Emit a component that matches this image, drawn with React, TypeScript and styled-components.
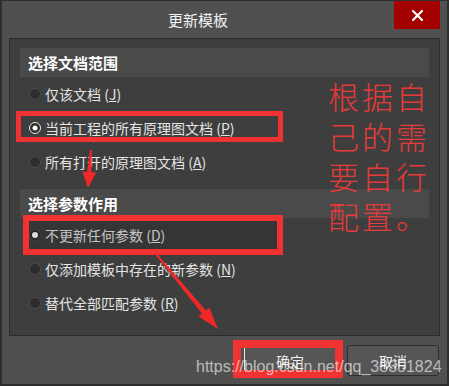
import React from 'react';
import styled, { createGlobalStyle } from 'styled-components';

const GlobalStyle = createGlobalStyle`
  html, body {
    margin: 0;
    padding: 0;
    background: #2e2e2e;
  }
  body {
    font-family: "Noto Sans CJK SC", "Noto Sans", sans-serif;
  }
`;

const Window = styled.div`
  position: relative;
  width: 449px;
  height: 386px;
  box-sizing: border-box;
  border: 2px solid #2e2e2e;
  border-top-width: 1px;
  background: #505050;
  display: flex;
  flex-direction: column;
  overflow: hidden;
`;

const TitleBar = styled.div`
  display: flex;
  height: 37px;
  padding-right: 7px;
  flex-shrink: 0;
`;

const Title = styled.div`
  flex: 1;
  text-align: center;
  line-height: 37px;
  font-size: 15px;
  color: #f2f2f2;
`;

const CloseButton = styled.div`
  width: 46px;
  height: 28px;
  background: #a50000;
  display: flex;
  align-items: center;
  justify-content: center;
`;

const Body = styled.div`
  flex: 1;
  display: flex;
  flex-direction: column;
  padding: 0 7px;
`;

const Panel = styled.div`
  height: 298px;
  box-sizing: border-box;
  border: 1px solid #2b2b2b;
  background: #3e3e3e;
  padding: 9px 10px 0 10px;
`;

const SectionHeader = styled.div<{ $gap?: boolean }>`
  height: 29px;
  margin-top: ${(p) => (p.$gap ? '10px' : '0')};
  background: #4a4a4a;
  padding-left: 8px;
  display: flex;
  align-items: center;
  font-size: 15px;
  font-weight: bold;
  color: #ffffff;
`;

const Row = styled.div`
  height: 34px;
  display: flex;
  align-items: center;
  padding-left: 9px;
  gap: 4px;
  font-size: 14px;
  color: #e4e4e4;
`;

const Radio = styled.span<{ $checked?: boolean; $ring?: boolean }>`
  position: relative;
  width: 12px;
  height: 12px;
  box-sizing: border-box;
  border-radius: 50%;
  background: #2d2d2d;
  border: 1px solid ${(p) => (p.$ring ? '#e8e8e8' : '#4c4c4c')};
  flex-shrink: 0;

  &::after {
    content: '';
    display: ${(p) => (p.$checked ? 'block' : 'none')};
    position: absolute;
    left: 50%;
    top: 50%;
    width: ${(p) => (p.$ring ? '5px' : '6px')};
    height: ${(p) => (p.$ring ? '5px' : '6px')};
    border-radius: 50%;
    background: #ffffff;
    transform: translate(-50%, -50%);
  }
`;

const Footer = styled.div`
  display: flex;
  justify-content: flex-end;
  gap: 11px;
  padding: 9px 1px 0 0;
`;

const Button = styled.div<{ $focused?: boolean }>`
  width: 92px;
  height: 31px;
  box-sizing: border-box;
  border: 1px solid #2c2c2c;
  border-left-color: ${(p) => (p.$focused ? '#e8e8e8' : '#2c2c2c')};
  border-radius: 3px;
  background: #565656;
  display: flex;
  align-items: center;
  justify-content: center;
  font-size: 14px;
  color: #f0f0f0;
`;

const Overlay = styled.div`
  position: absolute;
  left: -2px;
  top: -1px;
  width: 449px;
  height: 386px;
  pointer-events: none;
`;

const Mark = styled.div<{ $x: number; $y: number; $w: number; $h: number; $t: number; $fill?: string }>`
  position: absolute;
  left: ${(p) => p.$x}px;
  top: ${(p) => p.$y}px;
  width: ${(p) => p.$w}px;
  height: ${(p) => p.$h}px;
  box-sizing: border-box;
  border: ${(p) => p.$t}px solid #f03232;
  background: ${(p) => p.$fill || 'transparent'};
`;

const Note = styled.div`
  position: absolute;
  left: 328px;
  top: 76px;
  font-size: 31px;
  line-height: 40px;
  letter-spacing: 3px;
  font-weight: 300;
  color: #e63a3a;
  white-space: pre;
`;

const Watermark = styled.div`
  position: absolute;
  left: 196px;
  top: 359px;
  font-family: "Liberation Sans", Arial, sans-serif;
  font-size: 16px;
  line-height: 16px;
  color: rgba(255, 255, 255, 0.62);
  white-space: nowrap;
`;

const Arrows = styled.svg`
  position: absolute;
  left: 0;
  top: 0;
`;

const Option = ({ label, hotkey, checked, ring }: { label: string; hotkey: string; checked?: boolean; ring?: boolean }) => (
  <Row>
    <Radio $checked={checked} $ring={ring} />
    <span>
      {label} (<u>{hotkey}</u>)
    </span>
  </Row>
);

export default function App() {
  return (
    <>
      <GlobalStyle />
      <Window>
        <TitleBar>
          <Title>更新模板</Title>
          <CloseButton>
            <svg width="11" height="11" viewBox="0 0 11 11">
              <path d="M1 1 L10 10 M10 1 L1 10" stroke="#ffffff" strokeWidth="2.2" strokeLinecap="square" />
            </svg>
          </CloseButton>
        </TitleBar>
        <Body>
          <Panel>
            <SectionHeader>选择文档范围</SectionHeader>
            <Option label="仅该文档" hotkey="J" />
            <Option label="当前工程的所有原理图文档" hotkey="P" checked ring />
            <Option label="所有打开的原理图文档" hotkey="A" />
            <SectionHeader $gap>选择参数作用</SectionHeader>
            <Option label="不更新任何参数" hotkey="D" checked />
            <Option label="仅添加模板中存在的新参数" hotkey="N" />
            <Option label="替代全部匹配参数" hotkey="R" />
          </Panel>
          <Footer>
            <Button $focused>确定</Button>
            <Button>取消</Button>
          </Footer>
        </Body>
        <Overlay>
          <Mark $x={16} $y={111} $w={267} $h={31} $t={5} />
          <Mark $x={23} $y={215} $w={260} $h={40} $t={6} $fill="rgba(0,0,0,0.14)" />
          <Mark $x={233} $y={340} $w={110} $h={38} $t={8} />
          <Arrows width="449" height="386" viewBox="0 0 449 386">
            <polygon
              points="90,150 87.3,171.8 82.3,171.5 88,188 96.3,172.6 91.3,172.2 92,150"
              fill="#f02828"
            />
            <polygon
              points="155.2,254.6 202,313.6 198.5,316.5 218,329 209.3,307.5 205.8,310.4 156.8,253.4"
              fill="#f02828"
            />
          </Arrows>
          <Note>{'根据自\n己的需\n要自行\n配置。'}</Note>
          <Watermark>https://blog.csdn.net/qq_38351824</Watermark>
        </Overlay>
      </Window>
    </>
  );
}
